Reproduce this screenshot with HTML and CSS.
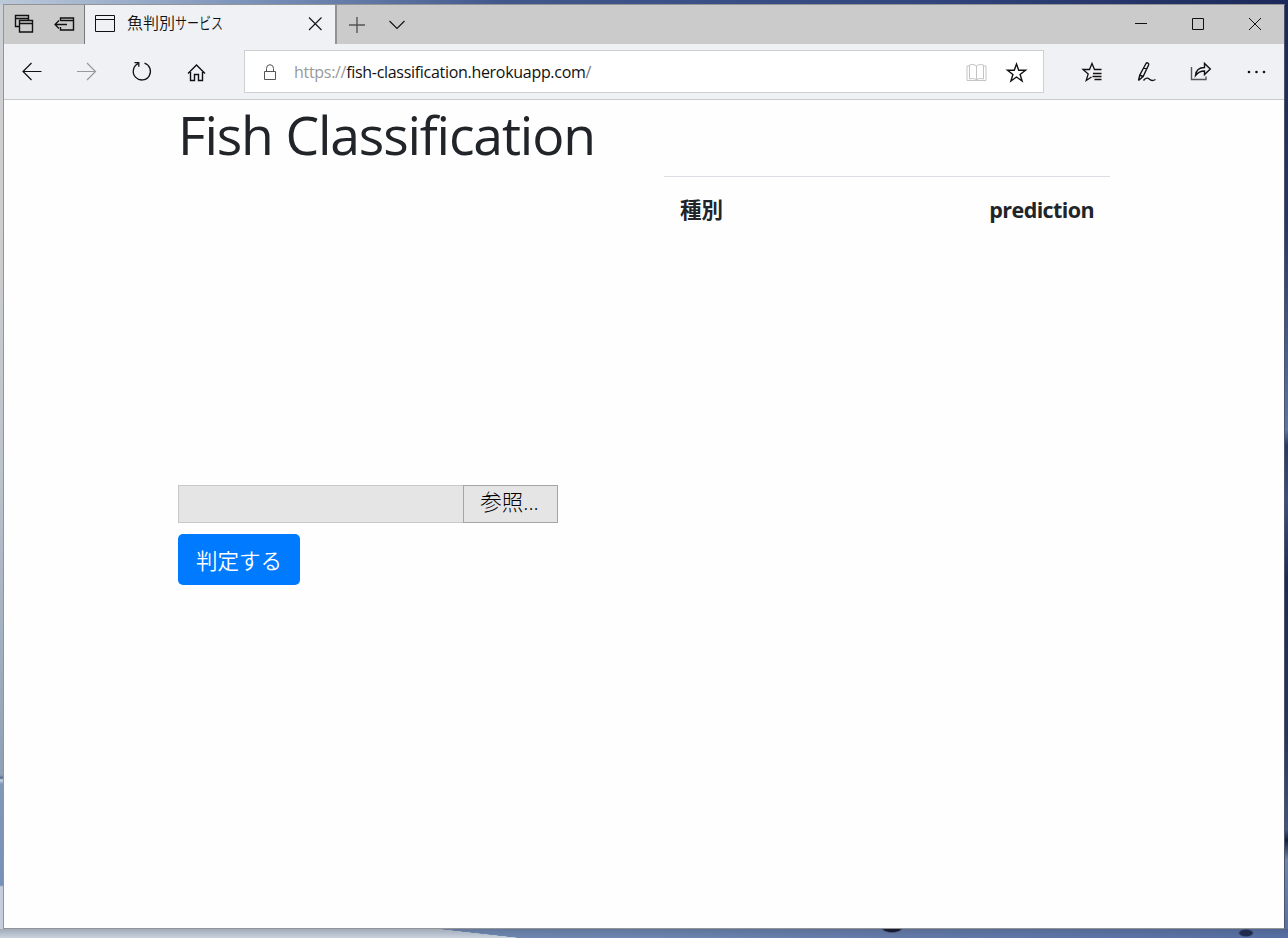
FILE: index.html
```html
<!DOCTYPE html>
<html lang="ja">
<head>
<meta charset="utf-8">
<title>魚判別サービス</title>
<link rel="stylesheet" href="styles.css">
</head>
<body>
<div class="desktop">
<div class="window">
  <header class="titlebar">
    <div class="tab-actions">
      <svg class="icon" width="40" height="39" viewBox="4 5 40 39"><path d="M19 26.500h-3.500v-11h13v5M15.500 18.500h13M19.500 20.500h13v11.500h-13zM19.500 23.500h13" stroke-width="1.400"/></svg>
      <svg class="icon" width="40" height="39" viewBox="44 5 40 39"><path d="M60.500 21v-3h13v12h-13v-3M60.500 20.500h13" stroke-width="1.400"/><path d="M55 24.500h12M59 20.500l-4 4 4 4" stroke-width="1.300"/></svg>
    </div>
    <div class="tab">
      <svg class="icon" width="42" height="39" viewBox="85 5 42 39"><path d="M95.500 15.500h19v16h-19zM95.500 19.500h19"/></svg>
      <span class="tab-title">魚判別<span class="kana">サービス</span></span>
      <svg class="icon tab-close" width="40" height="39" viewBox="295 5 40 39"><path d="M309 17.500l12.500 12.500M321.500 17.500l-12.500 12.500" stroke-width="1.100"/></svg>
    </div>
    <svg class="icon" width="40" height="39" viewBox="337 5 40 39"><path d="M349 25h16M357 17v16" stroke="#555" stroke-width="1.400"/></svg>
    <svg class="icon" width="40" height="39" viewBox="377 5 40 39"><path d="M389.500 21l7.500 7.500 7.500-7.500" stroke-width="1.100"/></svg>
    <div class="window-controls">
      <svg class="icon" width="57" height="39" viewBox="1113 5 57 39"><path d="M1135 23.500h12"/></svg>
      <svg class="icon" width="57" height="39" viewBox="1170 5 57 39"><path d="M1192.500 18.500h11v11h-11z"/></svg>
      <svg class="icon" width="57" height="39" viewBox="1227 5 57 39"><path d="M1249 18l12 12M1261 18l-12 12"/></svg>
    </div>
  </header>
  <nav class="toolbar">
    <svg class="icon" width="55" height="55" viewBox="4 44 55 55"><path d="M41.500 71.500h-18.500M31.500 63l-8.500 8.500 8.500 8.500" stroke-width="1.200"/></svg>
    <svg class="icon" width="55" height="55" viewBox="59 44 55 55"><path d="M77 71.500h18.500M87 63l8.500 8.500-8.500 8.500" stroke="#999" stroke-width="1.200"/></svg>
    <svg class="icon" width="55" height="55" viewBox="114 44 55 55"><path d="M144.500 63.200a8.600 8.600 0 1 1-6.500.5M134.500 62.700h4.300v4" stroke-width="1.300"/></svg>
    <svg class="icon" width="55" height="55" viewBox="169 44 55 55"><path d="M188 73.500l8.500-8.500 8.500 8.500M190.500 72v8.500h4v-6h4v6h4v-8.500" stroke-width="1.400"/></svg>
    <div class="address">
      <svg class="icon" width="48" height="41" viewBox="245 51 48 41"><path d="M264.500 71.500h11v8h-11zM266.500 71.500v-3a3.500 3.800 0 0 1 7 0v3" stroke="#555"/></svg>
      <span class="url"><span class="muted">https://</span>fish-classification.herokuapp.com<span class="slash">/</span></span>
      <svg class="icon reader" width="40" height="41" viewBox="956 51 40 41"><path d="M976.500 66c-1.500-1.700-5.500-1.700-7-1v14c2-.7 5.500-.7 7 1 1.500-1.700 5-1.700 7-1v-14c-2-.7-5.500-.7-7 1v14M969.500 66h-2.500v14.500h19v-14.500h-2.500" stroke="#c4c4c4"/></svg>
      <svg class="icon" width="47" height="41" viewBox="996 51 47 41"><path d="M1016.500 64l2.200 6.200h6.800l-5.400 4.200 2 6.600-5.600-4-5.600 4 2-6.600-5.400-4.200h6.800z" stroke-width="1.400"/></svg>
    </div>
    <div class="tools">
      <svg class="icon" width="55" height="55" viewBox="1064 44 55 55"><path d="M1101.500 69.500h-7l-2.500-6-2.500 6h-6.500l5.200 4.500-2 6.500 5.300-3.500M1093 73.500h8.500M1092.500 76.500h9M1094.500 79.500h7" stroke-width="1.300"/></svg>
      <svg class="icon" width="55" height="55" viewBox="1119 44 55 55"><path d="M1138.500 80.500l1.300-5.500 6.200-11.500c1-1.400 3.400-.4 2.600 1.500l-5.500 11.500-4.600 4M1139.800 75l3 1.500M1143.500 67.500l3.500 1.500M1143.500 80.500c2.500-3.200 4.500-2.700 6-1.200s3.300 1.800 6 .2" stroke-width="1.400"/></svg>
      <svg class="icon" width="55" height="55" viewBox="1174 44 55 55"><path d="M1191.500 67v12.500h14.500v-3" stroke="#555" stroke-width="1.400"/><path d="M1195.500 75.500c.5-5 3.700-8 9-8v-4l5.800 5.500-5.800 5.500v-3.500c-4 0-6.500 1.200-9 4.500z" stroke-width="1.400"/></svg>
      <svg class="icon" width="55" height="55" viewBox="1229 44 55 55"><g fill="#111" stroke="none"><circle cx="1249" cy="72" r="1.300"/><circle cx="1256.500" cy="72" r="1.300"/><circle cx="1264" cy="72" r="1.300"/></g></svg>
    </div>
  </nav>
  <main class="page">
    <h1>Fish Classification</h1>
    <div class="columns">
      <form class="upload">
        <div class="file-input"><div class="file-name"></div><div class="browse">参照...</div></div>
        <button class="submit" type="button">判定する</button>
      </form>
      <div class="results"><span>種別</span><span class="prediction">prediction</span></div>
    </div>
  </main>
</div>
</div>
</body>
</html>
```
FILE: styles.css
```css
* { box-sizing: border-box; }
body { margin: 0; font-family: "Open Sans", "Noto Sans CJK JP", sans-serif; color: #212529; }

.desktop {
  width: 1288px;
  height: 938px;
  padding: 4px 3px 9px;
  background:
    radial-gradient(ellipse 11px 5px at 892px 928px, #171c30 75%, transparent),
    radial-gradient(ellipse 8px 4px at 1246px 933px, #202b4d 70%, transparent),
    linear-gradient(to right, #bcc9da 0, #7890b8 260px, #42588c 500px, #33477f 900px, #1c2859 1288px) 0 0 / 100% 5px no-repeat,
    linear-gradient(rgba(70, 80, 100, 0.3), transparent) 0 100% / 100% 9px no-repeat,
    linear-gradient(to top right, #c9d3de 49%, transparent 51%) 430px 100% / 90px 10px no-repeat,
    linear-gradient(#c9d3de, #c9d3de) 0 100% / 431px 10px no-repeat,
    linear-gradient(to right, #7089b3 430px, #6d86b2 650px, #637aab 900px, #566fa5) 0 100% / 100% 10px no-repeat,
    linear-gradient(#ccd0d5 0, #cfcfcf 220px, #bbc3cc 480px, #8fa0b5 775px, #526a8d 778px, #cbd8e4 780px, #8298b8 784px, #7790b7 885px, #c5d0dc 887px) 0 0 / 4px 100% no-repeat,
    linear-gradient(#1c2755 0, #263665 220px, #5b78a8 430px, #283b65 445px, #3a5082 500px, #1d2a57 580px, #26365f 740px, #405783 830px, #142038 840px, #6e86ae 860px, #5670a5) 100% 0 / 5px 100% no-repeat;
}
.window {
  height: 925px;
  border: 1px solid #929498;
  border-right-color: #4c536b;
  background: #fefefe;
  overflow: hidden;
}
.icon { display: block; flex: none; fill: none; stroke: #111; }

.titlebar { display: flex; height: 39px; background: #cbcbcb; }
.tab-actions { display: flex; width: 80px; }
.tab {
  display: flex;
  width: 253px;
  border-left: 1px solid #77797d;
  border-right: 2px solid #929292;
  background: #f0f1f4;
}
.tab-title { color: #111; font: 350 16px/35px "Noto Sans CJK JP", sans-serif; white-space: nowrap; }
.kana { display: inline-block; transform: scaleX(0.75); transform-origin: left; }
.tab-close { margin-left: auto; }
.window-controls { display: flex; margin-left: auto; }

.toolbar {
  display: flex;
  height: 56px;
  background: #f0f1f4;
  border-bottom: 1px solid #c9cbc9;
}
.address {
  display: flex;
  width: 800px;
  height: 43px;
  margin: 6px 0 0 20px;
  border: 1px solid #cfd0d2;
  background: #fff;
}
.url { padding-left: 1px; color: #111; font-size: 16px; line-height: 43px; letter-spacing: -0.3px; }
.muted { color: #999; }
.slash { color: #777; }
.reader { margin-left: auto; }
.tools { display: flex; margin-left: auto; }

.page { padding: 0 174px; }
h1 { margin: 0; height: 76px; font-size: 53.5px; font-weight: 400; line-height: 70px; letter-spacing: -1.18px; white-space: nowrap; }
.columns { display: flex; justify-content: space-between; }
.upload { padding-top: 309px; }
.file-input { display: flex; width: 380px; height: 38px; }
.file-name { width: 285px; border: 1px solid #c8c8c8; border-right: 0; background: #e5e5e5; }
.browse { width: 95px; padding-right: 2px; border: 1px solid #a5a5a9; background: #e5e5e5; color: #000; font-size: 21.5px; line-height: 32px; text-align: center; font-weight: 300; }
.submit {
  display: block;
  width: 122px;
  height: 51px;
  margin-top: 11px;
  padding: 0;
  border: 0;
  border-radius: 5px;
  background: #007bff;
  color: #fff;
  font: 350 21.5px/51px "Noto Sans CJK JP", sans-serif;
}
.results {
  display: flex;
  justify-content: space-between;
  width: 446px;
  height: 68px;
  padding: 0 16px;
  border-top: 1px solid #dcdee5;
  font-size: 21.5px;
  font-weight: 700;
  line-height: 65px;
}
.prediction { letter-spacing: -0.6px; }
```
